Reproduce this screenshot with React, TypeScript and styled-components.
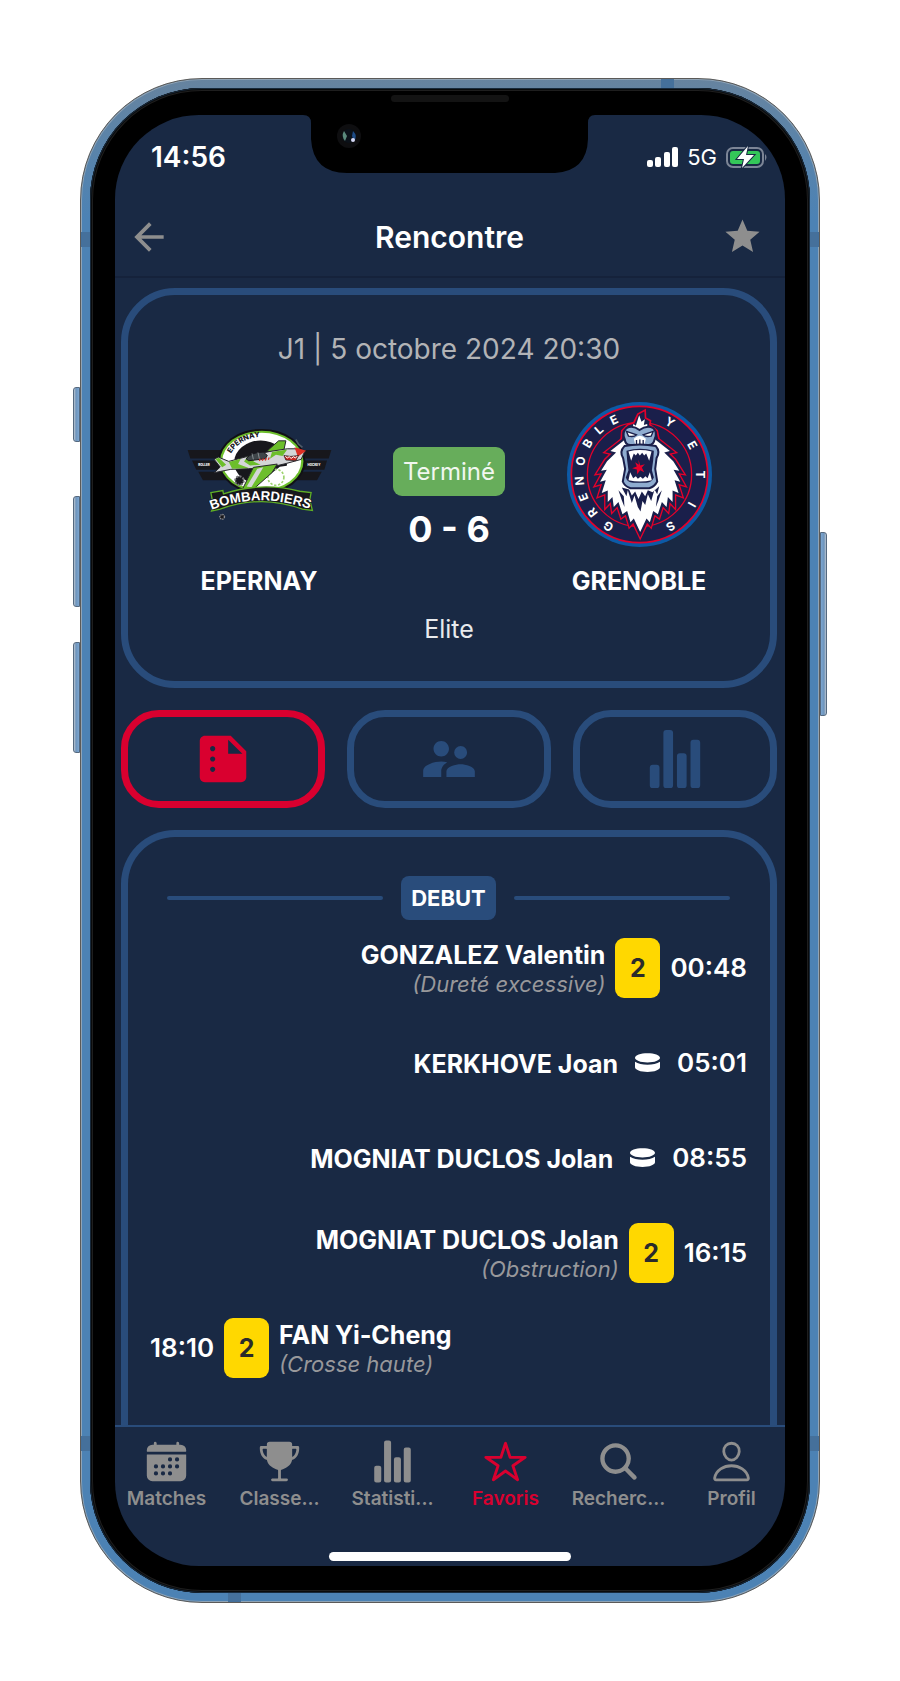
import React from 'react';
import styled, { createGlobalStyle } from 'styled-components';
import { IoCalendar, IoStatsChart, IoStarOutline, IoSearch, IoPersonOutline, IoTrophy } from 'react-icons/io5';
import { MdArrowBack, MdStar, MdSummarize, MdSupervisorAccount } from 'react-icons/md';
import { FaHockeyPuck } from 'react-icons/fa';

const color = {
  navy: '#192944',
  line: '#294c7b',
  grey: '#8e8e8e',
  red: '#d9002f',
  yellow: '#ffd800',
  green: '#67ad5b',
};

const GlobalStyle = createGlobalStyle`
  * { box-sizing: border-box; }
  body { margin: 0; background: #fff; font-family: Inter, "Liberation Sans", sans-serif; color: #fff; }
  button { font: inherit; color: inherit; background: none; border: 0; padding: 0; cursor: pointer; }
  p, h1, ul { margin: 0; padding: 0; }
  svg { display: block; }
`;

const Page = styled.main`
  display: flex;
  max-width: 900px;
  margin: 0 auto;
  padding: 78px 73px;
`;

const Rail = styled.div`
  flex: 0 0 7px;
  display: flex;
  flex-direction: column;
`;

const SideButton = styled.span<{ $height: number; $gap: number; $right?: boolean }>`
  height: ${p => p.$height}px;
  margin-top: ${p => p.$gap}px;
  border: 1px solid #55697f;
  border-radius: ${p => (p.$right ? '0 3px 3px 0' : '3px 0 0 3px')};
  background: linear-gradient(${p => (p.$right ? '270deg' : '90deg')}, #b9c4d0, #6e94bb 40%, #7ba6d2);
`;

const Frame = styled.div`
  position: relative;
  flex: 1;
  min-width: 0;
  padding: 9px;
  border: 1px solid #5b5a58;
  border-radius: 122px;
  background: linear-gradient(#66839f 0, #5f84a6 40px, #4c82b4 140px, #4c82b4);
  box-shadow: inset 0 0 0 1px #8fa3b5;
`;

const Antenna = styled.span<{ $side: 'top' | 'bottom' | 'left' | 'right'; $at: string }>`
  position: absolute;
  background: #45709b;
  ${p => (p.$side === 'top' || p.$side === 'bottom' ? `width: 13px; height: 9px; left: ${p.$at};` : `width: 9px; height: 15px; top: ${p.$at};`)}
  ${p => p.$side}: 0;
`;

const Bezel = styled.div`
  position: relative;
  padding: 27px 25px;
  border-radius: 112px;
  background: #000;
  box-shadow: inset 0 0 0 1px #17293b, inset 0 0 0 2px #0a0b0c, inset 0 0 0 3px #1e1e1e;
`;

const Speaker = styled.span`
  position: absolute;
  top: 7px;
  left: calc(50% - 59px);
  width: 118px;
  height: 7px;
  border-radius: 4px;
  background: #131313;
`;

const Screen = styled.div`
  position: relative;
  display: flex;
  flex-direction: column;
  overflow: hidden;
  border-radius: 84px;
  background: ${color.navy};
`;

const Notch = styled.svg`
  position: absolute;
  top: 0;
  left: calc(50% - 147px);
`;

const StatusBar = styled.div`
  display: flex;
  justify-content: space-between;
  align-items: center;
  height: 84px;
  padding: 0 17px 0 36px;
`;

const Clock = styled.time`
  font-size: 28px;
  font-weight: 600;
  line-height: 32px;
`;

const StatusIcons = styled.div`
  display: flex;
  align-items: center;
  gap: 9px;
  font-size: 22px;
  font-weight: 400;
  line-height: 28px;
`;

const Header = styled.header`
  display: grid;
  grid-template-columns: 44px 1fr 44px;
  align-items: center;
  height: 79px;
  padding: 0 21px 2px 12px;
  border-bottom: 2px solid #15223b;
  color: ${color.grey};
`;

const Title = styled.h1`
  padding-left: 8px;
  text-align: center;
  color: #fff;
  font-size: 30px;
  font-weight: 600;
  line-height: 36px;
`;

const HeaderButton = styled.button`
  display: flex;
  justify-content: center;
`;

const Content = styled.div`
  display: flex;
  flex-direction: column;
  gap: 22px;
  padding: 10px 8px 0 6px;
`;

const MatchCard = styled.section`
  display: flex;
  flex-direction: column;
  align-items: stretch;
  padding: 37px 36px;
  border: 7px solid ${color.line};
  border-radius: 54px;
  text-align: center;
`;

const MatchDate = styled.p`
  color: #b2b3b6;
  font-size: 28px;
  line-height: 34px;
`;

const Teams = styled.div`
  display: grid;
  grid-template-columns: repeat(3, 1fr);
  margin-top: 36px;
`;

const Team = styled.div`
  display: flex;
  flex-direction: column;
  align-items: center;
  gap: 18px;
  font-size: 25px;
  font-weight: 700;
  line-height: 32px;
`;

const Score = styled.div`
  display: flex;
  flex-direction: column;
  align-items: center;
  gap: 13px;
  padding-top: 45px;
  font-size: 36px;
  font-weight: 700;
  line-height: 40px;
`;

const Status = styled.span`
  padding: 0 10px;
  border-radius: 9px;
  background: ${color.green};
  color: #f1f7f0;
  font-size: 24px;
  font-weight: 400;
  line-height: 49px;
`;

const League = styled.p`
  margin-top: 17px;
  color: #e8eaed;
  font-size: 25px;
  line-height: 30px;
`;

const Views = styled.div`
  display: grid;
  grid-template-columns: repeat(3, 1fr);
  gap: 22px;
`;

const ViewButton = styled.button<{ $active?: boolean }>`
  display: flex;
  align-items: center;
  justify-content: center;
  height: 98px;
  border: 7px solid ${p => (p.$active ? color.red : color.line)};
  border-radius: 38px;
  color: ${p => (p.$active ? color.red : color.line)};
`;

const Timeline = styled.section`
  padding: 39px 23px 30px 22px;
  border: 7px solid ${color.line};
  border-bottom: 0;
  border-radius: 54px 54px 0 0;
`;

const Period = styled.div`
  display: flex;
  align-items: center;
  gap: 18px;
  padding: 0 17px;
  &::before, &::after {
    content: '';
    flex: 1;
    height: 4px;
    border-radius: 2px;
    background: ${color.line};
  }
`;

const PeriodLabel = styled.span`
  padding: 0 10px;
  border-radius: 8px;
  background: ${color.line};
  font-size: 22px;
  font-weight: 700;
  line-height: 44px;
`;

const Events = styled.ul`
  list-style: none;
`;

const EventRow = styled.li<{ $home?: boolean }>`
  display: flex;
  flex-direction: ${p => (p.$home ? 'row-reverse' : 'row')};
  justify-content: flex-end;
  align-items: center;
  gap: 10px;
  height: 95px;
  text-align: ${p => (p.$home ? 'left' : 'right')};
  font-size: 25px;
  font-weight: 700;
  line-height: 30px;
`;

const Player = styled.p`
  padding-top: 2px;
`;

const Reason = styled.p`
  color: #98989b;
  font-size: 22px;
  font-style: italic;
  font-weight: 400;
  line-height: 28px;
`;

const EventTime = styled.time`
  font-size: 26px;
  font-weight: 600;
`;

const Penalty = styled.span`
  width: 45px;
  border-radius: 9px;
  background: ${color.yellow};
  color: #2b2b2b;
  text-align: center;
  line-height: 60px;
`;

const Goal = styled.span`
  padding: 0 7px;
`;

const TabBar = styled.nav`
  border-top: 2px solid ${color.line};
  padding: 12px 0 5px;
`;

const Tabs = styled.div`
  display: grid;
  grid-template-columns: repeat(6, 1fr);
  margin: 0 -3px 0 -5px;
`;

const Tab = styled.button<{ $active?: boolean }>`
  display: flex;
  flex-direction: column;
  align-items: center;
  gap: 4px;
  color: ${p => (p.$active ? color.red : color.grey)};
  font-size: 19px;
  font-weight: 600;
  line-height: 22px;
`;

const HomeIndicator = styled.div`
  width: 242px;
  max-width: 60%;
  height: 9px;
  margin: 42px auto 0;
  border-radius: 5px;
  background: #fff;
`;

/* Advance widths of the badge letters, in em, used to centre each one on its angle. */
const ADVANCE: Record<string, number> = {
  G: 0.76, R: 0.66, E: 0.61, N: 0.77, O: 0.79, B: 0.67, L: 0.58, Y: 0.7, T: 0.66, I: 0.29, S: 0.66,
};

function ring(word: string, angles: number[], fontSize: number) {
  const points = angles.map((deg, i) => {
    const a = (deg * Math.PI) / 180;
    const half = (ADVANCE[word[i]] * fontSize) / 2;
    return {
      x: 267 + 168 * Math.sin(a) - half * Math.cos(a),
      y: 253 - 168 * Math.cos(a) - half * Math.sin(a),
    };
  });
  return {
    x: points.map(p => p.x.toFixed(1)).join(' '),
    y: points.map(p => p.y.toFixed(1)).join(' '),
    rotate: angles.join(' '),
  };
}

const MANE =
  'M269 110 L222 150 L180 183 L197 187 L170 213 L152 242 L169 239 L149 275 L166 270 L154 308 L172 301 L172 335 L186 320 L190 350 L204 335 L216 372 L230 362 L240 396 L250 385 L269 425 L288 385 L298 396 L308 362 L322 372 L334 335 L348 350 L352 320 L366 335 L366 301 L384 308 L372 270 L389 275 L369 239 L386 242 L368 213 L341 187 L358 183 L316 150 Z';

function YetisLogo() {
  const left = ring('GRENOBLE', [-149, -129, -112, -96, -77, -59, -42, -25], 36);
  const right = ring('YETIS', [30, 61, 90, 120, 149], 36);
  const letter = { fontSize: 36, fontWeight: 700, fill: '#fff', fontFamily: 'Inter, sans-serif' };
  return (
    <svg width="145" height="145" viewBox="50 36 434 434" role="img" aria-label="Grenoble Yetis">
      <circle cx="267" cy="253" r="217" fill="#0c5aa6" />
      <circle cx="267" cy="253" r="204" fill="#1a1f4b" stroke="#e4002b" strokeWidth="5" />
      <circle cx="267" cy="253" r="156" fill="none" stroke="#e4002b" strokeWidth="4" />
      <text {...letter} {...left}>GRENOBLE</text>
      <text {...letter} {...right}>YETIS</text>
      <path d={MANE} fill="#e4002b" stroke="#e4002b" strokeWidth="22" />
      <path d="M214 122 L232 104 L250 98 L262 72 L284 60 L285 84 L300 92 L298 104 L320 122 L326 150 L212 150 Z" fill="#1a1f4b" stroke="#e4002b" strokeWidth="5" />
      <path d={MANE} fill="#fff" stroke="#1a1f4b" strokeWidth="14" />
      <path d={MANE} fill="#fff" />
      <path d="M244 120 L249 102 L256 107 L266 76 L273 95 L283 88 L280 105 L290 102 L292 120 Z" fill="#fff" />
      <path d="M228 114 Q247 104 267 120 Q288 104 308 114 Q322 128 312 148 Q310 166 292 165 L242 165 Q224 166 223 148 Q213 128 228 114 Z" fill="#8facd0" stroke="#1a1f4b" strokeWidth="6" />
      <path d="M228 124 L258 134 Q250 142 234 138 Z M308 124 L278 134 Q286 142 302 138 Z" fill="#fff" stroke="#1a1f4b" strokeWidth="4" />
      <path d="M250 146 Q268 128 286 146 L282 164 L254 164 Z" fill="#fff" />
      <path d="M258 150 V162 M268 148 V162 M278 150 V162" stroke="#1a1f4b" strokeWidth="4" />
      <path d="M222 168 Q268 158 316 168 Q330 184 318 204 L314 236 L320 274 Q312 290 296 294 L240 294 Q222 288 217 274 L224 236 L218 204 Q206 184 222 168 Z" fill="#8facd0" stroke="#1a1f4b" strokeWidth="6" />
      <path d="M228 182 Q268 170 310 182 L308 210 L304 240 L310 262 Q304 276 288 278 L248 278 Q230 276 226 262 L234 240 L230 210 Z" fill="#1a1f4b" />
      <path d="M234 184 L242 212 L250 190 L256 196 L262 188 L268 196 L275 188 L281 196 L287 190 L296 212 L303 184 Q268 176 234 184 Z" fill="#fff" />
      <path d="M234 270 L239 246 L248 264 L256 258 L262 266 L270 260 L277 266 L285 258 L291 264 L298 246 L304 270 Q268 278 234 270 Z" fill="#fff" />
      <path d="M264 208 L269 226 L283 222 L274 232 L281 246 L269 240 L260 252 L259 238 L245 234 L259 229 L254 216 L265 224 Z" fill="#e4002b" />
      <path d="M214 292 L228 318 L232 300 L244 338 L252 316 L262 350 L270 364 L276 332 L284 344 L292 312 L302 332 L312 298 L320 312 L326 288 L306 306 L292 300 L284 318 L274 304 L264 326 L254 304 L244 316 L236 298 Z" fill="#1a1f4b" />
      <path d="M204 300 L214 330 L222 350 L220 318 Z M334 300 L324 330 L316 350 L320 318 Z" fill="#1a1f4b" />
    </svg>
  );
}

function BombardiersLogo() {
  return (
    <svg width="145" height="145" viewBox="50 35 437 437" role="img" aria-label="Epernay Bombardiers">
      <defs>
        <path id="arc-top" d="M183 190 A100 80 0 0 1 372 200" />
        <path id="arc-bottom" d="M124 360 Q275 300 442 366" />
      </defs>
      <path d="M52 180 H485 L477 205 H60 Z M65 211 H472 L464 239 H78 Z M84 245 H456 L442 271 H98 Z" fill="#17171c" />
      <ellipse cx="275" cy="214" rx="132" ry="98" fill="#111116" />
      <ellipse cx="275" cy="214" rx="126" ry="92" fill="#6cbe2b" />
      <ellipse cx="275" cy="214" rx="119" ry="86" fill="#fff" />
      <ellipse cx="272" cy="217" rx="80" ry="66" fill="#17171c" />
      <path d="M262 300 Q350 290 372 224 L330 230 L240 300 Z" fill="#fff" />
      <text fontSize="22" fontWeight="800" fill="#17171c" fontFamily="Inter, sans-serif">
        <textPath href="#arc-top">EPERNAY</textPath>
      </text>
      <text x="84" y="229" fontSize="9" fontWeight="800" fill="#fff" fontFamily="Inter, sans-serif">ROLLER</text>
      <text x="413" y="229" fontSize="9" fontWeight="800" fill="#fff" fontFamily="Inter, sans-serif">HOCKEY</text>
      <circle cx="318" cy="262" r="24" fill="none" stroke="#9ed36f" strokeWidth="5" strokeDasharray="7 5" />
      <g stroke="#26262b" strokeWidth="3" strokeLinejoin="round">
        <path d="M292 182 L326 152 L348 152 L342 180 L312 190 Z" fill="#6cbe2b" />
        <path d="M132 248 L150 231 L132 208 L144 201 L176 214 L236 198 L300 184 L352 176 L380 176 L406 181 L394 208 L350 220 L300 232 L236 236 L182 238 Z" fill="#d4d6d8" />
        <path d="M250 232 L322 222 L306 248 L252 296 L218 296 Z" fill="#6cbe2b" />
      </g>
      <path d="M374 171 L409 182 L384 200 Z" fill="#dc2f25" />
      <path d="M136 207 L146 203 L168 224 L156 232 Z M176 216 L212 206 L204 222 L236 234 L186 236 Z M232 200 L262 196 L250 214 L272 224 L240 226 L222 214 Z M306 186 L352 178 L338 198 L318 194 L300 206 Z" fill="#6cbe2b" />
      <path d="M262 236 L280 232 L244 292 L230 290 Z" fill="#d4d6d8" />
      <path d="M228 206 Q244 186 280 186 L292 196 L286 206 L236 212 Z" fill="#3e4549" stroke="#17171c" strokeWidth="3" />
      <path d="M246 190 L250 208 M264 187 L268 206" stroke="#aab2b4" strokeWidth="2" />
      <path d="M342 196 Q362 202 386 196 L378 212 L348 210 Z" fill="#c9251f" stroke="#17171c" strokeWidth="2" />
      <path d="M346 198 L352 204 L358 200 L364 205 L371 200 L377 204 L382 198" fill="none" stroke="#fff" strokeWidth="3" />
      <path d="M268 213 l3 -7 M277 212 l3 -7 M286 211 l3 -7 M295 209 l3 -7" stroke="#dc2f25" strokeWidth="4" />
      <path d="M378 148 L386 162 L398 172" fill="none" stroke="#4d5a68" strokeWidth="5" />
      <circle cx="208" cy="272" r="13" fill="#17171c" stroke="#77777b" strokeWidth="6" strokeDasharray="6 4" />
      <path d="M122 308 L158 302 L160 312 Q275 274 390 304 L424 308 L420 330 L428 362 L398 358 Q275 312 150 358 L124 364 L130 350 Z" fill="#17171c" stroke="#5fae25" strokeWidth="4" />
      <text fontFamily='"Liberation Sans", sans-serif' fontSize="40" fontWeight="700" strokeLinejoin="round" stroke="#17171c" strokeWidth="4" fill="#fff" paintOrder="stroke">
        <textPath href="#arc-bottom">BOMBARDIERS</textPath>
      </text>
      <circle cx="156" cy="381" r="7" fill="#17171c" stroke="#8d8d90" strokeWidth="4" strokeDasharray="4 2" />
    </svg>
  );
}

type MatchEvent = { time: string; player: string; reason?: string; home?: boolean };

const events: MatchEvent[] = [
  { time: '00:48', player: 'GONZALEZ Valentin', reason: '(Dureté excessive)' },
  { time: '05:01', player: 'KERKHOVE Joan' },
  { time: '08:55', player: 'MOGNIAT DUCLOS Jolan' },
  { time: '16:15', player: 'MOGNIAT DUCLOS Jolan', reason: '(Obstruction)' },
  { time: '18:10', player: 'FAN Yi-Cheng', reason: '(Crosse haute)', home: true },
];

const tabs = [
  { label: 'Matches', icon: <IoCalendar size={45} /> },
  { label: 'Classe...', icon: <IoTrophy size={45} /> },
  { label: 'Statisti...', icon: <IoStatsChart size={45} /> },
  { label: 'Favoris', icon: <IoStarOutline size={45} />, active: true },
  { label: 'Recherc...', icon: <IoSearch size={45} /> },
  { label: 'Profil', icon: <IoPersonOutline size={45} /> },
];

export default function App() {
  return (
    <>
      <GlobalStyle />
      <Page>
        <Rail>
          <SideButton $height={55} $gap={309} />
          <SideButton $height={111} $gap={54} />
          <SideButton $height={111} $gap={35} />
        </Rail>
        <Frame>
          <Antenna $side="top" $at="580px" />
          <Antenna $side="bottom" $at="147px" />
          <Antenna $side="left" $at="153px" />
          <Antenna $side="right" $at="153px" />
          <Antenna $side="left" $at="1357px" />
          <Antenna $side="right" $at="1357px" />
          <Bezel>
            <Speaker />
            <Screen>
              <Notch width="292" height="59" viewBox="0 0 292 59" aria-hidden="true">
                <path d="M0 -1 V0 Q8 0 8 8 V24 Q10 58 44 58 H252 Q284 56 285 24 V8 Q285 0 292 0 V-1 Z" fill="#000" />
                <circle cx="46" cy="21" r="12" fill="#0e0e10" />
                <circle cx="46" cy="21" r="7" fill="#0b1119" />
                <path d="M41 16 Q38 21 42 26 L44 21 Z" fill="#5b8a7c" />
                <path d="M50 16 Q55 21 51 26 L49 21 Z" fill="#1d4b86" />
                <circle cx="50" cy="25" r="2" fill="#d6d8f5" />
              </Notch>
              <StatusBar>
                <Clock>14:56</Clock>
                <StatusIcons>
                  <svg width="31" height="20" viewBox="0 0 31 20" fill="#fff" aria-label="Signal">
                    <rect x="0" y="13" width="6" height="7" rx="2" />
                    <rect x="8" y="10" width="6" height="10" rx="2" />
                    <rect x="17" y="5" width="6" height="15" rx="2" />
                    <rect x="25" y="0" width="6" height="20" rx="2" />
                  </svg>
                  <span>5G</span>
                  <svg width="42" height="22" viewBox="0 0 42 22" aria-label="Batterie">
                    <rect x="1" y="2" width="36" height="19" rx="6" fill="none" stroke="#7c8596" strokeWidth="2" />
                    <rect x="4" y="5" width="30" height="13" rx="3" fill="#34c759" />
                    <path d="M39 8 Q42 11 39 15 Z" fill="#7c8596" />
                    <path d="M22 0 L11 13 H18 L16 22 L28 9 H20 Z" fill="#fff" stroke={color.navy} strokeWidth="2" paintOrder="stroke" />
                  </svg>
                </StatusIcons>
              </StatusBar>
              <Header>
                <HeaderButton aria-label="Retour"><MdArrowBack size={44} /></HeaderButton>
                <Title>Rencontre</Title>
                <HeaderButton aria-label="Ajouter aux favoris"><MdStar size={41} /></HeaderButton>
              </Header>
              <Content>
                <MatchCard>
                  <MatchDate>J1 | 5 octobre 2024 20:30</MatchDate>
                  <Teams>
                    <Team><BombardiersLogo />EPERNAY</Team>
                    <Score><Status>Terminé</Status><span>0 - 6</span></Score>
                    <Team><YetisLogo />GRENOBLE</Team>
                  </Teams>
                  <League>Elite</League>
                </MatchCard>
                <Views>
                  <ViewButton $active aria-label="Résumé"><MdSummarize size={62} /></ViewButton>
                  <ViewButton aria-label="Équipes"><MdSupervisorAccount size={62} /></ViewButton>
                  <ViewButton aria-label="Statistiques"><IoStatsChart size={62} /></ViewButton>
                </Views>
                <Timeline>
                  <Period><PeriodLabel>DEBUT</PeriodLabel></Period>
                  <Events>
                    {events.map(e => (
                      <EventRow key={e.time} $home={e.home}>
                        <div>
                          <Player>{e.player}</Player>
                          {e.reason && <Reason>{e.reason}</Reason>}
                        </div>
                        {e.reason ? <Penalty>2</Penalty> : <Goal><FaHockeyPuck size={25} /></Goal>}
                        <EventTime>{e.time}</EventTime>
                      </EventRow>
                    ))}
                  </Events>
                </Timeline>
              </Content>
              <TabBar>
                <Tabs>
                  {tabs.map(t => (
                    <Tab key={t.label} $active={t.active}>{t.icon}<span>{t.label}</span></Tab>
                  ))}
                </Tabs>
                <HomeIndicator />
              </TabBar>
            </Screen>
          </Bezel>
        </Frame>
        <Rail>
          <SideButton $height={184} $gap={454} $right />
        </Rail>
      </Page>
    </>
  );
}
